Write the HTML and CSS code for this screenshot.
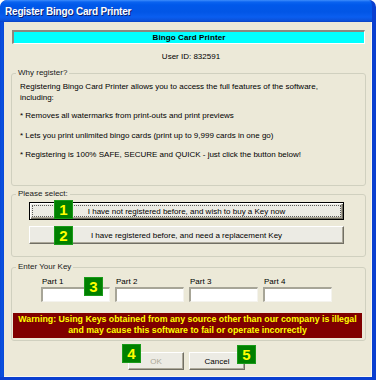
FILE: index.html
```html
<!DOCTYPE html>
<html>
<head>
<meta charset="utf-8">
<link rel="stylesheet" href="styles.css">
</head>
<body>
<div class="window">
  <div class="titlebar"><span class="title">Register Bingo Card Printer</span></div>
  <div class="client">
    <div class="banner">Bingo Card Printer</div>
    <div class="userid">User ID: 832591</div>

    <fieldset class="group why">
      <legend>Why register?</legend>
      <div class="why-body">
        <p class="para">Registering Bingo Card Printer allows you to access the full features of the software,<br>including:</p>
        <p class="para p2">* Removes all watermarks from print-outs and print previews</p>
        <p class="para p3">* Lets you print unlimited bingo cards (print up to 9,999 cards in one go)</p>
        <p class="para p4">* Registering is 100% SAFE, SECURE and QUICK - just click the button below!</p>
      </div>
    </fieldset>

    <fieldset class="group select">
      <legend>Please select:</legend>
      <div class="select-body">
        <button class="btn wide default"><span class="focus">I have not registered before, and wish to buy a Key now</span></button>
        <button class="btn wide second"><span class="focus none">I have registered before, and need a replacement Key</span></button>
      </div>
    </fieldset>

    <fieldset class="group key">
      <legend>Enter Your Key</legend>
      <div class="parts">
        <label class="part"><span class="plabel">Part 1</span><span class="input"></span></label>
        <label class="part"><span class="plabel">Part 2</span><span class="input"></span></label>
        <label class="part"><span class="plabel">Part 3</span><span class="input"></span></label>
        <label class="part"><span class="plabel">Part 4</span><span class="input"></span></label>
      </div>
      <div class="warning">Warning: Using Keys obtained from any source other than our company is illegal<br>and may cause this software to fail or operate incorrectly</div>
    </fieldset>

    <div class="footer">
      <button class="btn small disabled"><span class="focus none">OK</span></button>
      <button class="btn small"><span class="focus none">Cancel</span></button>
    </div>
  </div>

  <span class="badge b1">1</span>
  <span class="badge b2">2</span>
  <span class="badge b3">3</span>
  <span class="badge b4">4</span>
  <span class="badge b5">5</span>
</div>
</body>
</html>
```

FILE: styles.css
```css
html, body {
  margin: 0;
  padding: 0;
  background: #ffffff;
}

.window {
  position: relative;
  width: 376px;
  height: 380px;
  box-sizing: border-box;
  background: linear-gradient(to right, #0a46d6, #0852e0 2px, #0a46d6 4px);
  border-radius: 7px 7px 0 0;
  overflow: hidden;
  font-family: "Liberation Sans", Arial, sans-serif;
  font-size: 8px;
  color: #000;
  display: flex;
  flex-direction: column;
  border-right: 4px solid #0a3fd0;
  border-bottom: 3px solid #0a3fd0;
}

.titlebar {
  height: 22px;
  flex: none;
  display: flex;
  align-items: center;
  padding-left: 5px;
  margin-right: -4px;
  background: linear-gradient(to bottom, #3d8dfb 0px, #0a63f0 2px, #0058ea 5px, #0256e6 12px, #0a5ef0 17px, #0b4fd6 21px, #0a3fc0 22px);
  border-radius: 7px 7px 0 0;
}

.title {
  color: #fff;
  font-weight: bold;
  font-size: 10px;
  text-shadow: 1px 1px 0 #0a1f6e;
  letter-spacing: -0.2px;
}

.client {
  flex: 1;
  margin-left: 4px;
  background: #ece9d8;
  display: flex;
  flex-direction: column;
  box-shadow: inset -1px -1px 0 #f8f7f0;
}

.banner {
  margin: 8px 7px 0 8px;
  height: 14px;
  box-sizing: border-box;
  background: #00ffff;
  border-top: 2px solid #8a887f;
  border-left: 2px solid #8a887f;
  border-right: 1px solid #ffffff;
  border-bottom: 1px solid #ffffff;
  text-align: center;
  font-weight: bold;
  font-size: 8px;
  line-height: 11px;
  letter-spacing: 0.1px;
}

.userid {
  margin-top: 7px;
  line-height: 12px;
  text-align: center;
  padding-left: 6px;
}

.group {
  margin: 0 6px 0 7px;
  padding: 0;
  border: 1px solid #d0d0bf;
  border-radius: 3px;
  min-width: 0;
}

.group legend {
  margin-left: 4px;
  padding: 0 2px;
  line-height: 10px;
  color: #1a1a1a;
}

.why {
  margin-top: 5px;
  height: 118px;
  box-sizing: border-box;
}

.why-body {
  padding: 3px 0 0 8px;
}

.para {
  margin: 0;
  line-height: 11px;
  width: 334px;
}

.p2 { margin-top: 7px; }
.p3 { margin-top: 9px; }
.p4 { margin-top: 8px; }

.select {
  margin-top: 3px;
  height: 68px;
  box-sizing: border-box;
}

.select-body {
  padding: 3px 0 0 17px;
  display: flex;
  flex-direction: column;
  gap: 6px;
}

.btn {
  font-family: inherit;
  font-size: 8px;
  color: #000;
  background: #ecebe4;
  border: 1px solid;
  border-color: #ffffff #716f64 #716f64 #ffffff;
  box-shadow: inset -1px -1px 0 #aca899;
  padding: 2px;
  margin: 0;
  display: flex;
  align-items: stretch;
  box-sizing: border-box;
}

.btn .focus {
  flex: 1;
  display: flex;
  align-items: center;
  justify-content: center;
  border: 1px dotted #5a5a5a;
}

.btn .focus.none {
  border-color: transparent;
}

.wide {
  width: 315px;
  height: 18px;
}

.default {
  border: 1px solid #000;
  box-shadow: inset 1px 1px 0 #ffffff, inset -1px -1px 0 #716f64, inset -2px -2px 0 #aca899;
}

.key {
  margin-top: 5px;
  height: 79px;
  box-sizing: border-box;
  padding: 0;
}

.parts {
  display: flex;
  gap: 5px;
  padding: 5px 0 0 29px;
}

.part {
  display: flex;
  flex-direction: column;
  width: 69px;
}

.plabel {
  line-height: 10px;
  padding-left: 1px;
}

.input {
  height: 15px;
  box-sizing: border-box;
  background: #fff;
  border-top: 2px solid #a7a597;
  border-left: 2px solid #a7a597;
  border-right: 1px solid #f4f3ee;
  border-bottom: 1px solid #f4f3ee;
}

.warning {
  margin: 11px 3px 0 1px;
  height: 25px;
  background: #800000;
  color: #ffff00;
  font-weight: bold;
  font-size: 8.8px;
  text-align: center;
  line-height: 11px;
  padding-top: 1px;
  box-sizing: border-box;
}

.footer {
  margin-top: 11px;
  display: flex;
  justify-content: center;
  gap: 5px;
  padding-right: 3px;
}

.small {
  width: 56px;
  height: 18px;
}

.disabled {
  color: #aca899;
  text-shadow: none;
}

.badge {
  position: absolute;
  width: 19px;
  height: 19px;
  box-sizing: border-box;
  background: #008000;
  border: 1px solid #1a9a1a;
  color: #ffff00;
  font-weight: bold;
  font-size: 15px;
  line-height: 17px;
  text-align: center;
  font-family: "Liberation Sans", Arial, sans-serif;
}

.b1 { left: 54px; top: 200px; }
.b2 { left: 54px; top: 226px; }
.b3 { left: 84px; top: 277px; }
.b4 { left: 122px; top: 344px; }
.b5 { left: 237px; top: 345px; }
```
